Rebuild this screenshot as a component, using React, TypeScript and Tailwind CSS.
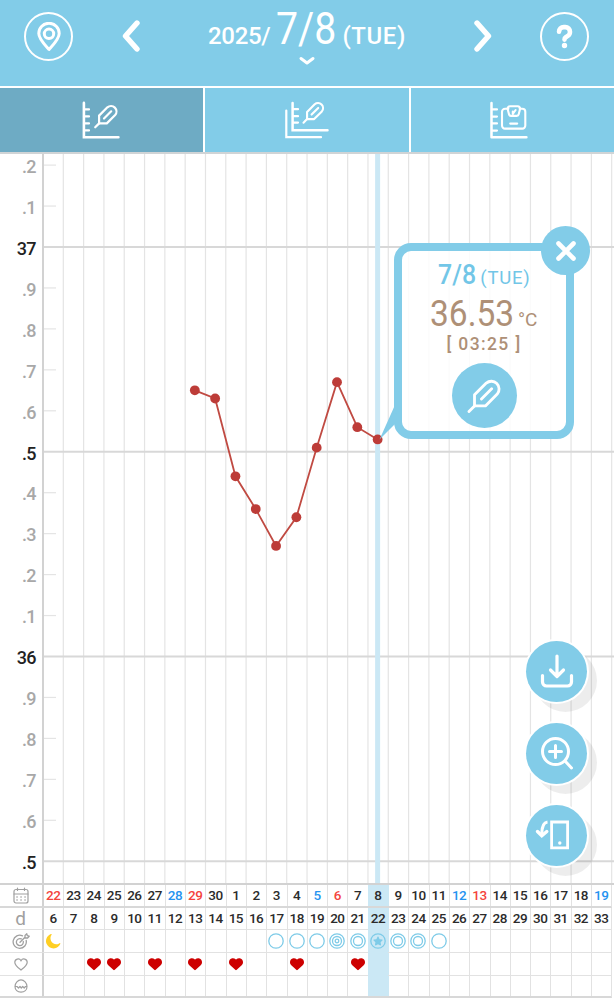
import type { ReactNode } from "react";
import { FaHeart, FaMoon, FaQuestion, FaStar } from "react-icons/fa6";

const FIRST_X = 43;
const COL = 20.31;
const DEG = 409.5;
const CHART_TOP = 154;

const colX = (i: number) => FIRST_X + COL * (i + 0.5) - 0.5;
const tempY = (t: number) => 247 - CHART_TOP + (37 - t) * DEG;

const readings = [36.65, 36.63, 36.44, 36.36, 36.27, 36.34, 36.51, 36.67, 36.56, 36.53];
const firstReading = 7;

const scaleLabels = [".2", ".1", "37", ".9", ".8", ".7", ".6", ".5", ".4", ".3", ".2", ".1", "36", ".9", ".8", ".7", ".6", ".5"];
const majorRows = [2, 7, 12, 17];

const dates = [22, 23, 24, 25, 26, 27, 28, 29, 30, 1, 2, 3, 4, 5, 6, 7, 8, 9, 10, 11, 12, 13, 14, 15, 16, 17, 18, 19];
const sundays = [0, 7, 14, 21];
const saturdays = [6, 13, 20, 27];
const today = 16;
const hearts = [2, 3, 5, 7, 9, 12, 15];
const marks: Record<number, string> = {
  0: "moon", 11: "one", 12: "one", 13: "one", 14: "three", 15: "two", 16: "star", 17: "two", 18: "two", 19: "one",
};

function PenShape({ width = 2 }: { width?: number }) {
  return (
    <g fill="none" stroke="currentColor" strokeWidth={width} strokeLinecap="round" strokeLinejoin="round">
      <path d="M5.3 19V11.2L13.6 2.9a5.5 5.5 0 0 1 7.75 7.75L13 19Z" />
      <path d="M5.3 19 1.4 22.9M10.2 14.1l7.2-7.2" />
    </g>
  );
}

function AxisTempIcon() {
  return (
    <svg width="38" height="38" viewBox="0 0 38 38" fill="none" stroke="currentColor" strokeWidth="2.2" strokeLinecap="round">
      <path d="M1.9 1.9V36.2H36.4" strokeWidth="2.6" />
      <path d="M2 8.4h5M2 15.4h5M2 22.4h5M2 29.4h5" />
      <g transform="translate(11.8 3.4)"><PenShape width={2.2} /></g>
    </svg>
  );
}

function DoubleAxisIcon() {
  return (
    <svg width="46" height="38" viewBox="0 0 46 38" fill="none" stroke="currentColor" strokeWidth="2.2" strokeLinecap="round">
      <path d="M2.3 9.5V36.2H37" />
      <path d="M8.6 1.9V29.2H43.5" strokeWidth="2.5" />
      <path d="M9 8.2h5M9 15.2h5M9 21.6h5" />
      <g transform="translate(18.2 .6) scale(.92)"><PenShape width={2.3} /></g>
    </svg>
  );
}

function WeightIcon() {
  return (
    <svg width="38" height="38" viewBox="0 0 38 38" fill="none" stroke="currentColor" strokeWidth="2.1" strokeLinecap="round" strokeLinejoin="round">
      <path d="M1.5 1.9V36.2H36.4" strokeWidth="2.5" />
      <path d="M2 8.4h5M2 15.6h5M2 22.4h5M2 29.6h5" />
      <path d="M18.4 7.8H15a3 3 0 0 0-3 3V24.6a3 3 0 0 0 3 3H32.300a3 3 0 0 0 3-3V10.800a3 3 0 0 0-3-3h-2.600" />
      <path d="M20 5.300h7.700a2.400 2.400 0 0 1 2.300 3l-1.300 5a2 2 0 0 1-2 1.600h-5.700a2 2 0 0 1-2-1.600l-1.300-5a2.400 2.400 0 0 1 2.300-3ZM22.800 10.600v2.200l2.800-3.800M20.200 22.600h7" />
    </svg>
  );
}

function Mark({ kind }: { kind?: string }) {
  if (!kind) return null;
  if (kind === "moon") return <FaMoon className="mr-px size-[17px] shrink-0 -rotate-[24deg] text-[#ffcf24]" />;
  return (
    <span className="relative flex size-[16px] items-center justify-center text-[#7ecbe8]">
      <svg width="16" height="16" viewBox="0 0 16 16" fill="none" stroke="currentColor" strokeWidth="1.300">
        <circle cx="8" cy="8" r="7.200" />
        {kind === "two" && <circle cx="8" cy="8" r="4.500" />}
        {kind === "three" && <circle cx="8" cy="8" r="4.500" />}
        {kind === "three" && <circle cx="8" cy="8" r="1.800" />}
      </svg>
      {kind === "star" && <FaStar className="absolute size-[10px]" />}
    </span>
  );
}

function Row({ icon, height, line, children }: { icon: ReactNode; height: string; line: string; children: (i: number) => ReactNode }) {
  return (
    <div className={`grid grid-cols-[44px_repeat(28,20.31px)] ${height}`}>
      <div className={`flex items-center justify-center border-r-2 border-r-[#d2d2d2] pr-px text-[#a0a0a0] ${line}`}>{icon}</div>
      {dates.map((_, i) => (
        <div
          key={i}
          className={`-ml-px flex items-center justify-center border-r ${line} ${i === today ? "border-r-[#cbe8f5] bg-[#cbe8f5]" : "border-r-[#e2e2e2]"} ${i === today && line.includes("border-b ") ? "!border-b-[#cbe8f5]" : ""}`}
        >
          {children(i)}
        </div>
      ))}
    </div>
  );
}

function FloatingButton({ children }: { children: ReactNode }) {
  return (
    <button className="flex size-[61px] items-center justify-center rounded-full bg-[#82cce8] text-white shadow-[0_0_0_2px_#fff,9px_9px_0_1px_rgba(0,0,0,0.07)]">
      {children}
    </button>
  );
}

function Chart() {
  const points = readings.map((t, i) => [colX(firstReading + i), tempY(t)]);
  return (
    <svg className="block" width="570" height="729" viewBox="44 0 570 729">
      {dates.map((_, i) => (
        <path key={i} d={`M${FIRST_X + COL * (i + 1)} 0V729`} stroke="#e4e4e4" strokeWidth="1.200" />
      ))}
      {scaleLabels.map((_, i) => {
        const y = tempY(37.2 - i * 0.1);
        return majorRows.includes(i)
          ? <path key={i} d={`M44 ${y}H614`} stroke="#d8d8d8" strokeWidth="2.200" />
          : <path key={i} d={`M44 ${y}H56`} stroke="#e4e4e4" strokeWidth="1.200" />;
      })}
      <path d={`M${colX(today)} 0V729`} stroke="#cbe8f5" strokeWidth="5" />
      <polyline points={points.map((p) => p.join(",")).join(" ")} fill="none" stroke="#c04a42" strokeWidth="1.800" />
      {points.map(([x, y]) => <circle key={x} cx={x} cy={y} r="4.900" fill="#bd3c38" />)}
    </svg>
  );
}

function ReadingPopup() {
  return (
    <div className="absolute top-[89px] left-[394px] h-[196px] w-[180px] rounded-[17px] border-8 border-[#82cce8] bg-white/85">
      <svg className="absolute top-[154px] -left-[24px]" width="20" height="38" viewBox="0 0 20 38">
        <path d="M17 0 1.500 34.500 19 17Z" fill="#82cce8" />
      </svg>
      <div className="flex flex-col items-center">
        <div className="mt-[9px] flex h-[30px] w-[93px] items-baseline whitespace-nowrap text-[#72c6e7]">
          <span className="w-[44px] origin-left scale-x-[0.890] text-[28px] leading-[30px] font-medium">7/8</span>
          <span className="text-[18.500px] leading-[20px] tracking-[0.800px]">(TUE)</span>
        </div>
        <div className="mt-[5px] flex h-[38px] w-[108px] items-baseline whitespace-nowrap text-[#ae9077]">
          <span className="w-[88px] origin-left scale-x-[0.930] text-[36px] leading-[38px]">36.53</span>
          <span className="text-[19px] leading-[20px]">°C</span>
        </div>
        <div className="mt-px h-[20px] text-[17.500px] leading-[20px] font-medium tracking-[1.400px] whitespace-pre text-[#ae9077]">[ 03:25 ]</div>
        <button className="mt-[9px] flex size-[65px] items-center justify-center rounded-full bg-[#82cce8] text-white">
          <svg width="34" height="34" viewBox="0 0 24 24"><PenShape width={2} /></svg>
        </button>
      </div>
      <button className="absolute -top-[25px] -right-[24px] flex size-[49px] items-center justify-center rounded-full bg-[#82cce8] text-white">
        <svg width="20" height="20" viewBox="0 0 20 20" stroke="currentColor" strokeWidth="4.600" strokeLinecap="round"><path d="m2.500 2.500 15 15M17.500 2.500l-15 15" /></svg>
      </button>
    </div>
  );
}

export default function App() {
  return (
    <div className="flex h-[1000px] w-[614px] flex-col overflow-hidden bg-white font-['Roboto',sans-serif]">
      <header className="flex h-[86px] shrink-0 items-start bg-[#82cce8] px-[24px] pt-[12px] text-white">
        <button className="flex size-[49px] items-center justify-center rounded-full border-2 border-white">
          <svg width="24" height="30" viewBox="0 0 24 30" fill="none" stroke="currentColor" strokeWidth="3">
            <path d="M12 27.500C8 23 1.800 17 1.800 11.500a10.200 10.200 0 0 1 20.400 0C22.200 17 16 23 12 27.500Z" strokeLinejoin="round" />
            <circle cx="12" cy="11.800" r="4.700" />
          </svg>
        </button>
        <button className="mt-[7px] ml-[49px]">
          <svg width="18" height="34" viewBox="0 0 18 34" fill="none" stroke="currentColor" strokeWidth="5.400" strokeLinecap="round" strokeLinejoin="round"><path d="M15 4 3.500 17 15 30" /></svg>
        </button>
        <div className="ml-[68px] flex w-[198px] flex-col items-center">
          <div className="-mt-[7px] flex h-[48px] w-full items-baseline whitespace-nowrap">
            <span className="w-[70px] text-[24px] leading-[24px] font-medium tracking-[-0.300px]">2025/</span>
            <span className="w-[66px] origin-left scale-x-[0.880] text-[44.500px] leading-[48px]">7/8</span>
            <span className="text-[24px] leading-[24px] font-medium tracking-[0.600px]">(TUE)</span>
          </div>
          <svg className="mt-[3px]" width="18" height="10" viewBox="0 0 18 10" fill="none" stroke="currentColor" strokeWidth="3" strokeLinecap="round" strokeLinejoin="round"><path d="m3 2.500 6 4.500 6-4.500" /></svg>
        </div>
        <button className="mt-[7px] ml-[68px]">
          <svg width="18" height="34" viewBox="0 0 18 34" fill="none" stroke="currentColor" strokeWidth="5.400" strokeLinecap="round" strokeLinejoin="round"><path d="M3 4 14.500 17 3 30" /></svg>
        </button>
        <button className="ml-[48px] flex size-[49px] items-center justify-center rounded-full border-2 border-white">
          <FaQuestion className="size-[25px] overflow-visible" stroke="currentColor" strokeWidth="30" />
        </button>
      </header>

      <nav className="grid h-[68px] shrink-0 grid-cols-[203px_206px_205px] border-t-2 border-b-2 border-t-white border-b-[#d0d4d6] bg-[#82cce8] text-white">
        <button className="flex items-start bg-[#6eabc4] pt-[13px] pl-[81.500px]"><AxisTempIcon /></button>
        <button className="flex items-start border-l-2 border-white pt-[13px] pl-[78.500px]"><DoubleAxisIcon /></button>
        <button className="flex items-start border-l-2 border-white pt-[13px] pl-[79px]"><WeightIcon /></button>
      </nav>

      <main className="relative flex h-[729px] shrink-0">
        <div className="flex w-[44px] flex-col overflow-hidden border-r-2 border-[#d2d2d2]">
          <div className="-mt-[8px]">
            {scaleLabels.map((label, i) => (
              <div key={i} className={`flex h-[40.950px] items-center justify-end pr-[6px] text-[18px] font-medium tracking-[-0.600px] ${majorRows.includes(i) ? "text-[#222]" : "text-[#a8a8a8]"}`}>{label}</div>
            ))}
          </div>
        </div>
        <Chart />
        <ReadingPopup />
        <div className="absolute top-[486.500px] left-[526px] flex flex-col gap-[21px]">
          <FloatingButton>
            <svg width="36" height="36" viewBox="0 0 36 36" fill="none" stroke="currentColor" strokeWidth="3.200" strokeLinecap="round" strokeLinejoin="round"><path d="M18 3v20M11.500 17 18 23.500 24.500 17M3.500 22.500V29a4 4 0 0 0 4 4h21a4 4 0 0 0 4-4v-6.500" /></svg>
          </FloatingButton>
          <FloatingButton>
            <svg width="36" height="36" viewBox="0 0 36 36" fill="none" stroke="currentColor" strokeWidth="3" strokeLinecap="round"><circle cx="16.500" cy="16.500" r="13" /><path d="M16.500 10.500v12M10.500 16.500h12" /><path d="m26.500 26.500 6 6.500" /></svg>
          </FloatingButton>
          <FloatingButton>
            <svg width="44" height="32" viewBox="0 0 44 32" fill="none" stroke="currentColor" strokeWidth="2.800">
              <path d="M16.600 3H32.600V28.800H16.600Z" />
              <path d="M12.500 3C8.500 3.500 6.800 8 6.800 15" strokeWidth="3.200" />
              <path d="m2.500 12.500 4.300 4.300 5-4.300" strokeWidth="3.400" strokeLinecap="round" />
              <circle cx="24.800" cy="24" r="1.700" fill="currentColor" stroke="none" />
            </svg>
          </FloatingButton>
        </div>
      </main>

      <section className="shrink-0 border-t-2 border-[#d2d2d2]">
        <Row height="h-[23px]" line="border-b-2 border-b-[#d8d8d8]" icon={
          <svg width="16" height="17" viewBox="0 0 16 17" fill="none" stroke="currentColor" strokeWidth="1.200" strokeLinecap="round"><rect x="1" y="2.500" width="14" height="13.500" rx="2" /><path d="M1 7h14M4.500 1v2.500M11.500 1v2.500" /><path d="M4 10h.1M8 10h.1M12 10h.1M4 13h.1M8 13h.1M12 13h.1" strokeWidth="1.600" /></svg>
        }>
          {(i) => <span className={`text-[13.500px] leading-none font-medium tracking-[-0.500px] ${sundays.includes(i) ? "text-[#f4433c]" : saturdays.includes(i) ? "text-[#2593f0]" : "text-[#2b2b2b]"}`}>{dates[i]}</span>}
        </Row>
        <Row height="h-[22px]" line="border-b border-b-[#e2e2e2]" icon={<span className="text-[19px] leading-none">d</span>}>
          {(i) => <span className="text-[13.500px] leading-none font-medium tracking-[-0.500px] text-[#2b2b2b]">{i + 6}</span>}
        </Row>
        <Row height="h-[23px]" line="border-b border-b-[#e2e2e2]" icon={
          <svg width="18" height="17" viewBox="0 0 18 17" fill="none" stroke="currentColor" strokeWidth="1.300" strokeLinecap="round" strokeLinejoin="round"><path d="M10.500 2.800A6.600 6.600 0 1 0 14.200 7.500" /><path d="M9.300 5.900a3.500 3.500 0 1 0 2 2.500" /><path d="m8 9.300 5-5V2.400l1.800-1.600.5 1.900 1.900.5-1.600 1.800H13" /></svg>
        }>
          {(i) => <Mark kind={marks[i]} />}
        </Row>
        <Row height="h-[23px]" line="border-b border-b-[#e2e2e2]" icon={
          <svg width="14" height="13" viewBox="0 0 14 13" fill="none" stroke="currentColor" strokeWidth="1.200"><path d="M7 12C4.500 10 .8 7.500.8 4.300A3.300 3.300 0 0 1 7 2.700a3.300 3.300 0 0 1 6.200 1.600C13.200 7.500 9.500 10 7 12Z" /></svg>
        }>
          {(i) => hearts.includes(i) && <FaHeart className="size-[14px] shrink-0 text-[#cd0000]" />}
        </Row>
        <Row height="h-[22px]" line="border-b-2 border-b-[#d8d8d8]" icon={
          <svg width="14" height="14" viewBox="0 0 14 14" fill="none" stroke="currentColor" strokeWidth="1.200" strokeLinejoin="round"><path d="M7 .8C10 .8 13 4.200 13 7.500S10.500 13.200 7 13.200 1 11 1 7.500 4 .8 7 .8Z" /><path d="M1 7.500h2l1.500 1.500L6 7.500l1.300 1.500 1.400-1.500 1.500 1.500 1.300-1.500H13" /></svg>
        }>
          {() => null}
        </Row>
      </section>
    </div>
  );
}
